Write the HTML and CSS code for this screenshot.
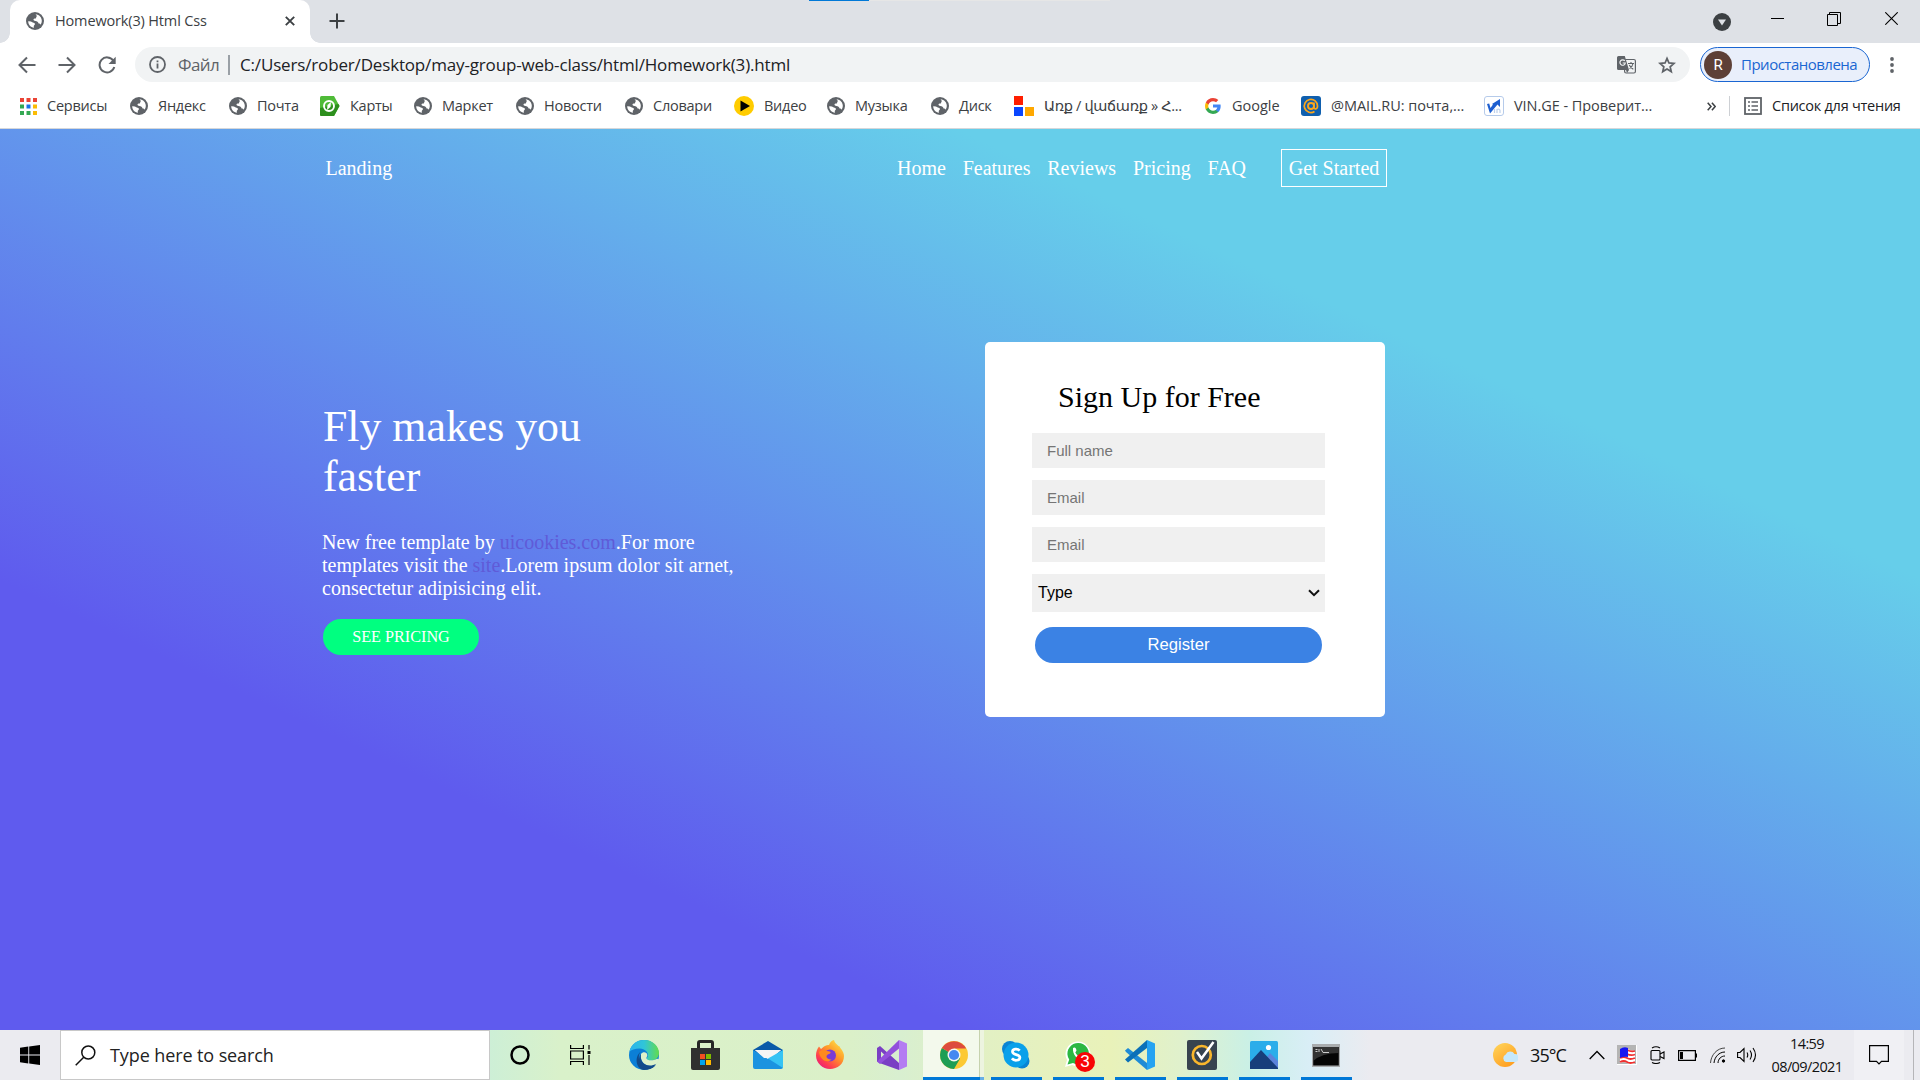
FILE: index.html
```html
<!DOCTYPE html>
<html lang="ru">
<head>
<meta charset="utf-8">
<title>Homework(3) Html Css</title>
<link rel="stylesheet" href="styles.css">
</head>
<body>
<svg class="defs" width="0" height="0">
  <defs>
    <symbol id="globe" viewBox="0 0 18 18">
      <circle cx="9" cy="9" r="9" fill="#5f6368"/>
      <path d="M9.500 2.200c3.800.3 6.300 3.200 6.300 6.500 0 1.500-.5 2.900-1.200 4-.3-.9-1-1.300-2-1.300-.4-1.600-1.500-2.500-3.200-2.500-1.200 0-1.900-.5-1.900-1.300 0-.9.900-1 1.800-1 .9 0 .7-1.300 1.200-1.900.6-.6.200-1.500-1-2.500z" fill="#fff"/>
      <path d="M2.200 9.300c1.800-.1 3.300.2 4.600 1.100.9.600 2.200.5 2.200 1.500 0 1-1.100 1.200-1.200 2.200-.1.700 0 1.200.2 1.700C4.700 15.400 2.200 12.700 2.200 9.300z" fill="#fff"/>
    </symbol>
  </defs>
</svg>
<div class="screen">
  <header class="browser">
    <div class="tabstrip">
      <div class="progress"></div>
      <div class="tab">
        <svg class="i18"><use href="#globe"/></svg>
        <span class="tab-title">Homework(3) Html Css</span>
        <svg class="tab-close" width="10" height="10" viewBox="0 0 10 10"><path d="M.8.8l8.400 8.400M9.200.8L.8 9.200" stroke="#3c4043" stroke-width="1.900"/></svg>
      </div>
      <svg class="plus" width="16" height="16" viewBox="0 0 16 16"><path d="M8 .5v15M.5 8h15" stroke="#3c4043" stroke-width="2"/></svg>
      <div class="winctl">
        <svg width="18" height="18" viewBox="0 0 18 18"><circle cx="9" cy="9" r="9" fill="#3c4043"/><path d="M5 6.500h8L9 12.500z" fill="#dee1e6"/></svg>
        <svg width="13" height="13" viewBox="0 0 13 13"><path d="M0 6.500h13" stroke="#000"/></svg>
        <svg width="14" height="14" viewBox="0 0 14 14" fill="none" stroke="#000"><path d="M.5 2.500h10v11H.5zM2.500 2.500v-2h11v11h-3"/></svg>
        <svg width="13" height="13" viewBox="0 0 13 13"><path d="M.3.3l12.400 12.400M12.700.3L.3 12.700" stroke="#000" stroke-width="1.100"/></svg>
      </div>
    </div>
    <div class="toolbar">
      <div class="navbtns">
        <svg width="18" height="18" viewBox="0 0 18 18" fill="none" stroke="#5f6368" stroke-width="2"><path d="M17.500 9H2M9 1.500L1.500 9 9 16.500"/></svg>
        <svg width="18" height="18" viewBox="0 0 18 18" fill="none" stroke="#5f6368" stroke-width="2"><path d="M.5 9H16M9 1.500L16.500 9 9 16.500"/></svg>
        <svg width="18" height="18" viewBox="0 0 18 18" fill="none" stroke="#5f6368" stroke-width="2"><path d="M15.200 4.500A7.500 7.500 0 1 0 16.300 11"/><path d="M17.700.8v7.200h-7.200z" fill="#5f6368" stroke="none"/></svg>
      </div>
      <div class="omnibox">
        <svg width="17" height="17" viewBox="0 0 17 17"><circle cx="8.500" cy="8.500" r="7.500" fill="none" stroke="#5f6368" stroke-width="1.800"/><path d="M7.600 7.500h1.800v5H7.600zM7.600 4.500h1.800v1.800H7.600z" fill="#5f6368"/></svg>
        <span class="scheme">Файл</span>
        <span class="sep"></span>
        <span class="url">C:/Users/rober/Desktop/may-group-web-class/html/Homework(3).html</span>
        <svg class="translate" width="19" height="18" viewBox="0 0 19 18"><rect x="7.600" y="3.500" width="10.800" height="13.500" rx="1.500" fill="#f1f3f4" stroke="#5f6368" stroke-width="1.200"/><path d="M1.500 0h6.300l4.200 14H1.500A1.500 1.500 0 0 1 0 12.500v-11A1.500 1.500 0 0 1 1.500 0zM9 14h3l-2 3z" fill="#5f6368"/><path d="M7.800 4.900A2.700 2.700 0 1 0 8.300 7H5.700" fill="none" stroke="#f1f3f4" stroke-width="1.200"/><path d="M11 7.500h6M14 6v1.500M16 7.500c-.4 2.500-2 4.200-3.500 5M12.300 9c1 2.200 2.500 3.300 4 4.200" fill="none" stroke="#5f6368" stroke-width="1.100"/></svg>
        <svg width="18" height="18" viewBox="0 0 24 24"><path d="M12 3.200l2.600 6.100 6.700.6-5.100 4.400 1.500 6.500L12 17.400l-5.700 3.400 1.500-6.500L2.700 9.900l6.700-.6z" fill="none" stroke="#5f6368" stroke-width="2.300"/></svg>
      </div>
      <div class="profile"><span class="avatar">R</span><span class="paused">Приостановлена</span></div>
      <svg class="dots" width="4" height="16" viewBox="0 0 4 16" fill="#5f6368"><circle cx="2" cy="2" r="1.900"/><circle cx="2" cy="8" r="1.900"/><circle cx="2" cy="14" r="1.900"/></svg>
    </div>
    <div class="bookmarks">
      <div class="bm"><svg class="i17" viewBox="0 0 17 17"><path d="M0 0h4v4H0zM6.500 0h4v4h-4zM13 0h4v4h-4z" fill="#ea4335"/><path d="M0 6.500h4v4H0zM0 13h4v4H0zM6.500 13h4v4h-4z" fill="#34a853"/><path d="M6.500 6.500h4v4h-4z" fill="#1a73e8"/><path d="M13 6.500h4v4h-4zM13 13h4v4h-4z" fill="#fbbc04"/></svg><span>Сервисы</span></div>
      <div class="bm"><svg class="i18"><use href="#globe"/></svg><span>Яндекс</span></div>
      <div class="bm"><svg class="i18"><use href="#globe"/></svg><span>Почта</span></div>
      <div class="bm"><svg width="20" height="20" viewBox="0 0 20 20"><path d="M0 1.500Q0 0 1.500 0H14l5.500 10L14 20H1.500Q0 20 0 18.500z" fill="#4fbb38"/><path d="M0 12l18.500-4 1 2L14 20H1.500Q0 20 0 18.500z" fill="#2d8f1d"/><circle cx="9" cy="10" r="5" fill="none" stroke="#fff" stroke-width="1.900"/><path d="M11 6L10.500 11 7 14 7.500 9z" fill="#fff"/></svg><span>Карты</span></div>
      <div class="bm"><svg class="i18"><use href="#globe"/></svg><span>Маркет</span></div>
      <div class="bm"><svg class="i18"><use href="#globe"/></svg><span>Новости</span></div>
      <div class="bm"><svg class="i18"><use href="#globe"/></svg><span>Словари</span></div>
      <div class="bm"><svg width="20" height="20" viewBox="0 0 20 20"><circle cx="10" cy="10" r="10" fill="#fc0"/><path d="M6.500 4.500L16 10l-9.500 5.500z"/></svg><span>Видео</span></div>
      <div class="bm"><svg class="i18"><use href="#globe"/></svg><span>Музыка</span></div>
      <div class="bm"><svg class="i18"><use href="#globe"/></svg><span>Диск</span></div>
      <div class="bm arm"><svg width="20" height="20" viewBox="0 0 20 20"><path d="M0 0h9v9H0z" fill="#ff1e00"/><path d="M0 11h9v9H0z" fill="#0a46ff"/><path d="M11 11h9v9h-9z" fill="#ffa800"/></svg><span>Առք / վաճառք » Հ...</span></div>
      <div class="bm goo"><svg width="16" height="16" viewBox="0 0 48 48"><path fill="#4285f4" d="M47 24.500c0-1.600-.2-3.200-.4-4.700H24v9h13c-.6 3-2.300 5.500-4.800 7.200v6h7.700C44.400 37.900 47 31.800 47 24.500z"/><path fill="#34a853" d="M24 48c6.500 0 11.900-2.100 15.900-5.800l-7.700-6c-2.200 1.400-4.900 2.300-8.200 2.300-6.300 0-11.600-4.200-13.500-9.900h-8v6.200C6.500 42.600 14.600 48 24 48z"/><path fill="#fbbc05" d="M10.500 28.600c-1-3-1-6.200 0-9.200v-6.200h-8c-3.300 6.700-3.300 14.900 0 21.600z"/><path fill="#ea4335" d="M24 9.500c3.500 0 6.700 1.200 9.200 3.600l6.800-6.800C35.900 2.400 30.500 0 24 0 14.600 0 6.500 5.400 2.500 13.200l8 6.200C12.400 13.700 17.700 9.500 24 9.500z"/></svg><span>Google</span></div>
      <div class="bm mail"><svg width="20" height="20" viewBox="0 0 20 20"><rect width="20" height="20" rx="3" fill="#0f5fae"/><circle cx="10" cy="10" r="3" fill="none" stroke="#fda61a" stroke-width="1.900"/><path d="M13 6.500v5c0 2 3.500 2.200 3.500-1.500A6.600 6.600 0 1 0 13.500 15.500" fill="none" stroke="#fda61a" stroke-width="1.700"/></svg><span>@MAIL.RU: почта,...</span></div>
      <div class="bm vin"><svg width="20" height="20" viewBox="0 0 20 20"><rect x=".5" y=".5" width="19" height="19" rx="2.500" fill="#fff" stroke="#b6cbea"/><path d="M3 8l2.200-.5L6.500 12 9 8.500l-1-.5L16 3v8l-2.500-2.500L6 17.500z" fill="#1e5fd0"/><path d="M10.500 13v4M13 17v-3.500q2.500-1 3 1V17" fill="none" stroke="#bdd0ec" stroke-width="1.200"/></svg><span>VIN.GE - Проверит...</span></div>
      <svg class="more" width="9" height="9" viewBox="0 0 9 9" fill="none" stroke="#3c4043" stroke-width="1.500"><path d="M.7.7l3.300 3.800L.7 8.300M4.900.7l3.300 3.800-3.300 3.800"/></svg>
      <div class="bm reading"><svg width="18" height="18" viewBox="0 0 18 18"><rect x="1" y="1" width="16" height="16" fill="none" stroke="#5f6368" stroke-width="1.800"/><path d="M4 5h2M7.500 5H14M4 9h2M7.500 9H14M4 13h2M7.500 13H14" stroke="#5f6368" stroke-width="1.700"/></svg><span>Список для чтения</span></div>
    </div>
  </header>

  <main class="page">
    <nav class="nav">
      <span class="brand">Landing</span>
      <div class="links"><span>Home</span><span>Features</span><span>Reviews</span><span>Pricing</span><span>FAQ</span></div>
      <span class="start">Get Started</span>
    </nav>
    <div class="hero">
      <section class="intro">
        <h1>Fly makes you<br>faster</h1>
        <p>New free template by <a>uicookies.com</a>.For more<br>templates visit the <a>site</a>.Lorem ipsum dolor sit arnet,<br>consectetur adipisicing elit.</p>
        <span class="pricing">SEE PRICING</span>
      </section>
      <section class="card">
        <h2>Sign Up for Free</h2>
        <div class="field">Full name</div>
        <div class="field">Email</div>
        <div class="field">Email</div>
        <div class="select"><span>Type</span><svg width="12" height="8" viewBox="0 0 12 8"><path d="M1 1.200l5 5 5-5" fill="none" stroke="#111" stroke-width="2"/></svg></div>
        <div class="register">Register</div>
      </section>
    </div>
  </main>

  <footer class="taskbar">
    <div class="win"><svg width="20" height="20" viewBox="0 0 20 20"><path d="M0 2.800l8.300-1.200v8H0zM9.200 1.500L20 0v9.600H9.200zM0 10.400h8.300v8L0 17.200zM9.200 10.400H20V20L9.200 18.500z"/></svg></div>
    <div class="search"><svg width="21" height="21" viewBox="0 0 21 21" fill="none" stroke="#111" stroke-width="1.500"><circle cx="13.300" cy="7.500" r="6.500"/><path d="M8.700 12.200L.7 20.200"/></svg><span>Type here to search</span></div>
    <div class="apps">
      <div class="app"><svg width="20" height="20" viewBox="0 0 20 20"><circle cx="10" cy="10" r="8.500" fill="none" stroke="#000" stroke-width="2.500"/></svg></div>
      <div class="app taskview"><svg width="21" height="20" viewBox="0 0 21 20" fill="none" stroke="#000" stroke-width="1.200"><path d="M.6 0v3.500h12.800V0M.6 6h12.800v8H.6zM.6 20v-3.500h12.800V20M19 0v4.500M19 10v10"/><path d="M17.500 6h3v3h-3z" fill="#000" stroke="none"/></svg></div>
      <div class="app"><svg width="30" height="30" viewBox="0 0 30 30"><defs><linearGradient id="e1" x1="0" x2="1"><stop offset="0" stop-color="#2bb3ee"/><stop offset=".5" stop-color="#30c5d8"/><stop offset="1" stop-color="#63dc4c"/></linearGradient></defs><circle cx="15" cy="15" r="15" fill="#0b7fd6"/><path d="M.3 12C2 4 8 0 15 0c9 0 15 6.500 15 13 0 4.500-3.500 7.500-8 7.500-3.500 0-5-1.200-4-2.500C21 14 17 8.500 10.500 8.500 6 8.500 2 10 .3 12z" fill="url(#e1)"/><path d="M11.500 12C7 18 12 27 20 27c3 0 5-.8 7-2-3 3.500-7 5-12 5C7 29 5 17 11.500 12z" fill="#114a8b"/><path d="M12 14c1.500-2.500 6-2.500 6.300 1 .1 1.500-1 2.200-.9 3.300.3 2 5.500 3.200 10.600.5l1.800.2c0 1.700-1.300 4-2.500 5.200-6 4.300-17 .5-15.300-10.200z" fill="#dcf1ca"/><path d="M12 14c-1.500 6 2.500 11.500 8.500 11.500 3 0 5-.7 6.500-1.500-2 3-5 5-9 5C10 28.500 8 19 12 14z" fill="#114a8b"/></svg></div>
      <div class="app"><svg width="30" height="30" viewBox="0 0 30 30"><path d="M7.500 9V3q0-1.500 1.500-1.500h11q1.500 0 1.500 1.500v6" fill="none" stroke="#262626" stroke-width="3"/><path d="M0 8h29v20q0 2-2 2H2q-2 0-2-2z" fill="#303030"/><path d="M9 14h5v5H9z" fill="#f25022"/><path d="M15 14h5v5h-5z" fill="#7fba00"/><path d="M9 20h5v5H9z" fill="#00a4ef"/><path d="M15 20h5v5h-5z" fill="#ffb900"/></svg></div>
      <div class="app"><svg width="30" height="28" viewBox="0 0 30 28"><path d="M0 9L15 0l15 9v4H0z" fill="#0a5aa8"/><path d="M2 9h26L15 20z" fill="#f5f5f5"/><path d="M0 9l15 9 15-9v17q0 2-2 2H2q-2 0-2-2z" fill="#1b93e0"/><path d="M2 9h26l-9 8h-8z" fill="#f5f5f5"/><path d="M30 9v18L15 17.500z" fill="#36c3f4"/></svg></div>
      <div class="app"><svg width="30" height="30" viewBox="0 0 30 30"><defs><linearGradient id="f1" x1="1" y1="0" x2=".2" y2="1"><stop offset="0" stop-color="#fff44f"/><stop offset=".45" stop-color="#ff9a28"/><stop offset=".8" stop-color="#ff3c50"/><stop offset="1" stop-color="#e61a80"/></linearGradient></defs><path d="M4 6.500L6 9l3-2.500C11 5 13 5 14 5c1-3 3-4.500 5-5 .5 3 3 4 4.500 6 1 .3 1.500.8 1.500 1.500C28 11 29 14 29 16c0 8-6.500 13-14 13S1 23 1 15.500C1 12 2 9 4 6.500z" fill="url(#f1)"/><circle cx="15" cy="15.500" r="6" fill="#7a3bd6"/><path d="M4 12c3-3 6-2 8-1 2 .3 4 .5 3.500 2-1 1.500-3.500 1-4 3-.3 2 2 3.500 5 3.500-3.500 4-11.500 1-12.500-7.500z" fill="#ff8a1e"/></svg></div>
      <div class="app"><svg width="30" height="30" viewBox="0 0 30 30"><path d="M0 8l3-2 19 17v7L2.500 23 0 21.500zM4 11.500v7.500l4-3.700z" fill="#7a3fc4" fill-rule="evenodd"/><path d="M0 21.500L22 0v8.500L3 24z" fill="#9250dc"/><path d="M22 0l8 3.500v23L22 30z" fill="#b47cf2"/></svg></div>
      <div class="app active"><svg width="28" height="28" viewBox="0 0 28 28"><circle cx="14" cy="14" r="14" fill="#fcc934"/><path d="M14 14L1.900 7A14 14 0 0 0 14 28l6.100-10.500z" fill="#1e9e55"/><path d="M14 14L1.900 7A14 14 0 0 1 26.100 7.500H14z" fill="#dd4b3e"/><circle cx="14" cy="14" r="6.500" fill="#f6f8f0"/><circle cx="14" cy="14" r="5.100" fill="#4688f1"/></svg></div>
      <div class="app open"><svg width="28" height="28" viewBox="0 0 28 28"><circle cx="8" cy="8" r="8" fill="#0a84d4"/><circle cx="20" cy="20" r="7.500" fill="#0a84d4"/><circle cx="14" cy="14" r="12.500" fill="#09a0ea"/><path d="M17.700 9.700C15.500 7.200 10.300 7.800 10.500 10.900c.3 3.400 7.500 2 7.400 5.700-.2 3.200-5.800 3.600-8 .8" fill="none" stroke="#fff" stroke-width="2.700"/></svg></div>
      <div class="app open"><svg width="26" height="30" viewBox="0 0 26 30"><path d="M0 27l2-7A12.500 12.500 0 1 1 7 25z" fill="#fff"/><path d="M2.500 24.500l1.700-5A10.700 10.700 0 1 1 8 23z" fill="#2cb742"/><path d="M8 8c2-1.500 3 0 3.500 2.500l-1.200 2C11.500 15 13 16 15 17l2-1.500 3 2c-2 5-13 .5-12-9.500z" fill="#fff"/></svg><span class="badge">3</span></div>
      <div class="app open"><svg width="30" height="30" viewBox="0 0 30 30"><path d="M0 10.500L3 8l19 15v7L1 12z" fill="#1f8bd6"/><path d="M0 19.500L22 0v8L3 22.500z" fill="#0b70b8"/><path d="M22 0l8 3.500v23L22 30z" fill="#25a3f2"/></svg></div>
      <div class="app open"><svg width="30" height="30" viewBox="0 0 30 30"><rect width="30" height="30" rx="2" fill="#37434f"/><circle cx="14.800" cy="15" r="9" fill="none" stroke="#f9b62c" stroke-width="2.700"/><path d="M10 12l4.500 6.500L26.500 2" fill="none" stroke="#fff" stroke-width="2.500"/></svg></div>
      <div class="app open"><svg width="28" height="28" viewBox="0 0 28 28"><rect width="28" height="28" rx="1.500" fill="#2badea"/><path d="M12 23l8-11 8 8v8H12z" fill="#5b83db"/><path d="M0 21L11 9l17 18v1H0z" fill="#173e7b"/><circle cx="18.500" cy="6.500" r="2.600" fill="#fff"/></svg></div>
      <div class="app open"><svg width="28" height="23" viewBox="0 0 28 23"><path d="M0 0h28v23H0z" fill="#a9acae"/><path d="M1.200 3h25.600v18.500H1.200z" fill="#050505"/><path d="M1.200 3h25.600v6Q10 9 1.200 17z" fill="#333"/><path d="M3.500 5.500h2M3.500 7.500h2M7 5v3M9 5l2 3.500h6" stroke="#ccc" fill="none"/></svg></div>
    </div>
    <div class="tray">
      <svg class="sun" width="25" height="25" viewBox="0 0 25 25"><defs><linearGradient id="s1" x1="0" y1="0" x2=".7" y2="1"><stop offset="0" stop-color="#ffd75e"/><stop offset="1" stop-color="#ff9d1f"/></linearGradient></defs><circle cx="12" cy="12" r="12" fill="url(#s1)"/><path d="M13 19a4 4 0 0 1-.3-7.500 5 5 0 0 1 8.800-.5 4 4 0 0 1 .3 8z" fill="#c5e8fb"/></svg>
      <span class="temp">35°C</span>
      <svg class="t1" width="16" height="10" viewBox="0 0 16 10"><path d="M.7 9L8 1.500 15.300 9" fill="none" stroke="#000" stroke-width="1.300"/></svg>
      <svg class="t2" width="20" height="20" viewBox="0 0 20 20"><path d="M0 0h20v20H0z" fill="#fff"/><path d="M0 0h19v19H0z" fill="#b4b4b4"/><path d="M3 4.500q4-3 7-1t8 2.500v12q-5 2-8 0t-7 0z" fill="#fff"/><path d="M3 13q4-2 7 0t8 0M3 17q4-2 7 0t8 0M10 5q4 2 8 1M10 9q4 2 8 .5" fill="none" stroke="#ef3030" stroke-width="1.800"/><path d="M3 4q4-3 8-1v9q-4-1-8 1z" fill="#1717f2"/></svg>
      <svg class="t3" width="16" height="18" viewBox="0 0 16 18" fill="none" stroke="#000" stroke-width="1.100"><rect x="1" y="4.500" width="9" height="9.500" rx="1"/><path d="M10 8l4-2v6.500l-4-2M2 2q4-2.500 8 0M2 16.500q4 2 8 0"/></svg>
      <svg class="t4" width="19" height="11" viewBox="0 0 19 11"><path d="M.6.6h16.800v9.800H.6z" fill="none" stroke="#000" stroke-width="1.200"/><path d="M2 2h3v7H2zM17.500 3.500H19v4h-1.500z"/></svg>
      <svg class="t5" width="16" height="17" viewBox="0 0 16 17" fill="none" stroke="#000"><path d="M.5 16C1 8 7 1 15 1" stroke="#444"/><path d="M4 16c.5-6 5-11 11-11M8 16c.2-4 3-7 7-7"/><circle cx="13.500" cy="14" r="1.200" fill="#000"/></svg>
      <svg class="t6" width="21" height="16" viewBox="0 0 21 16" fill="none" stroke="#000" stroke-width="1.100"><path d="M.6 5.500H3L7 1.500v13l-4-4H.6zM10 5.500q1.500 2.500 0 5M13 3.500q3 4.500 0 9M16 1q5 7 0 14"/></svg>
      <div class="clock"><span class="time">14:59</span><span class="date">08/09/2021</span></div>
      <div class="note"><svg width="20" height="20" viewBox="0 0 20 20"><path d="M.6.600h18.800v15.800H12.500L10 19l-2.500-2.600H.6z" fill="none" stroke="#000" stroke-width="1.200"/></svg></div>
    </div>
  </footer>
</div>
</body>
</html>
```
FILE: styles.css
```css
* { box-sizing: border-box; }
body { margin: 0; background: #fff; }
.defs { display: block; position: absolute; }
.screen { display: flex; flex-direction: column; width: 1920px; height: 1080px; overflow: hidden; font-family: "Open Sans", "Noto Sans", "DejaVu Sans", sans-serif; white-space: nowrap; }
svg { flex: none; display: block; }
.i18 { width: 18px; height: 18px; }
.i17 { width: 17px; height: 17px; }

.browser { height: 129px; flex: none; border-bottom: 1px solid #d5d7da; }
.tabstrip { position: relative; height: 43px; background: #dee1e6; display: flex; padding-left: 10px; }
.progress { position: absolute; left: 809px; top: 0; width: 301px; height: 1px; background: linear-gradient(90deg, #0078d7 60px, #e6e6e6 60px); }
.tab { position: relative; width: 300px; background: #fff; border-radius: 10px 10px 0 0; display: flex; align-items: center; padding: 0 15px 1px 16px; }
.tab::before, .tab::after { content: ""; position: absolute; bottom: 0; width: 10px; height: 10px; }
.tab::before { left: -10px; background: radial-gradient(circle at 0 0, transparent 9.5px, #fff 10px); }
.tab::after { right: -10px; background: radial-gradient(circle at 100% 0, transparent 9.5px, #fff 10px); }
.tab-title { margin-left: 11px; font-size: 14.500px; letter-spacing: -.150px; color: #3c4043; padding-bottom: 1px; }
.tab-close { margin-left: auto; }
.plus { margin: 13px 0 0 19px; }
.winctl { margin-left: auto; padding-right: 22px; display: grid; grid-template-columns: 58px 56px 58px 13px; align-items: center; height: 37px; }
.winctl svg:first-child { margin-top: 6px; }

.toolbar { height: 43px; display: flex; align-items: center; padding: 0 26px 0 18px; }
.navbtns { display: flex; gap: 22px; width: 117px; }
.omnibox { width: 1555px; height: 35px; border-radius: 18px; background: #f1f3f4; display: flex; align-items: center; padding: 0 14px; }
.scheme { margin-left: 12px; width: 50px; font-size: 17px; letter-spacing: -.6px; color: #5f6368; }
.sep { width: 2px; height: 20px; background: #9aa0a6; margin-right: 10px; }
.url { font-size: 17px; letter-spacing: -.16px; color: #202124; }
.translate { margin: 0 22px 0 auto; }
.profile { margin-left: 10px; width: 170px; height: 35px; border: 1.500px solid #1a66d2; border-radius: 18px; background: #e9effb; display: flex; align-items: center; padding-left: 3px; color: #1a66d2; font-size: 15px; }
.avatar { width: 28px; height: 28px; border-radius: 50%; background: #5d4037; color: #fff; font: 15px/28px Roboto, sans-serif; text-align: center; margin-right: 9px; }
.paused { letter-spacing: -.5px; padding-bottom: 2px; }
.dots { margin-left: auto; }

.bookmarks { height: 40px; display: grid; grid-template-columns: 110px 99px 91px 94px 102px 109px 109px 93px 104px 83px 191px 96px 183px 223px 22px 1fr; padding-left: 20px; align-items: center; color: #3c4043; }
.bm { display: flex; align-items: center; gap: 10px; font-size: 14.500px; letter-spacing: -.25px; min-width: 0; }
.bm span { padding-bottom: 2px; }
.goo { gap: 11px; letter-spacing: 0; }
.mail, .vin { letter-spacing: -.05px; }
.arm { letter-spacing: -.35px; }
.reading { border-left: 1px solid #cdd0d4; height: 20px; padding-left: 14px; color: #202124; }

.page { flex: 1; background: linear-gradient(25deg, #5f5bee 25%, #66ceea 75%); font-family: "Liberation Serif", serif; color: #fff; font-size: 20px; }
.nav { display: flex; align-items: center; height: 38px; margin: 20px 0 0 325.500px; line-height: 39px; }
.brand { width: 571.500px; }
.links { display: flex; gap: 16.800px; width: 384px; }
.start { width: 106px; height: 38px; border: 1px solid #fff; line-height: 37px; text-align: center; }
.hero { display: flex; justify-content: space-between; align-items: flex-start; width: 1062px; margin: 155px 0 0 323px; }
.intro { padding-top: 59px; }
h1 { margin: 0; font-size: 43.800px; font-weight: 400; line-height: 50px; }
p { margin: 30px 0 19px -1px; line-height: 23px; }
p a { color: #5f5bd8; }
.pricing { display: block; width: 156px; height: 36px; border-radius: 18px; background: #00ff80; font-size: 16.200px; line-height: 36px; text-align: center; }
.card { width: 400px; height: 375px; border-radius: 5px; background: #fff; padding: 37px 60px 0 47px; color: #000; font-family: "Liberation Sans", sans-serif; }
h2 { margin: 0 0 19px 26px; font: 400 30px/35px "Liberation Serif", serif; }
.field { height: 35px; margin-bottom: 12px; background: #f0f0f0; color: #757575; font-size: 15px; line-height: 35px; padding-left: 15px; }
.select { height: 38px; background: #f0f0f0; display: flex; align-items: center; justify-content: space-between; padding: 0 5px 0 6px; font-size: 16px; }
.register { height: 36px; margin: 15px 3px 0; border-radius: 18px; background: #3b82e4; color: #fff; font-size: 16.670px; line-height: 35px; text-align: center; }

.taskbar { height: 50px; flex: none; display: flex; background: linear-gradient(90deg, #ebebf0 480px, #cdefd6 490px, #d9f1ca 560px, #dbf0c8 850px, #d8efd0 900px, #e2f0c4 980px, #e9f2b9 1110px, #e0f1cc 1180px, #caf0e6 1250px, #d9eef6 1310px, #ebebf0 1370px); color: #111; }
.win { width: 60px; display: flex; align-items: center; padding-left: 20px; }
.search { width: 430px; background: #fff; border: 1px solid #c8c8c8; display: flex; align-items: center; padding-left: 14px; font-size: 18px; letter-spacing: -.1px; }
.search span { margin-left: 14px; color: #222; }
.apps { display: flex; width: 992px; margin-left: -1px; }
.app { position: relative; width: 62px; height: 50px; display: flex; align-items: center; justify-content: center; }
.taskview { padding-right: 3px; }
.active { background: linear-gradient(90deg, #f3f9ec 56px, #c6d2ae 56px, #c6d2ae 57px, #edf4e0 57px, #edf4e0 61px, transparent 61px); }
.active::after, .open::after { content: ""; position: absolute; left: 6px; bottom: 0; width: 51px; height: 3px; background: #0078d7; }
.active::after { left: 0; width: 61px; background: linear-gradient(90deg, #0078d7 57px, #66aee7 57px); }
.badge { position: absolute; left: 28px; top: 22px; width: 20px; height: 20px; border-radius: 50%; background: #f80505; color: #fff; font: 17px/20px "Liberation Sans", sans-serif; text-align: center; }
.tray { flex: 1; display: flex; align-items: center; padding-left: 12px; }
.temp { width: 59px; margin-left: 12px; font-size: 18px; letter-spacing: -.9px; }
.t2 { margin-left: 12px; }
.t3 { margin-left: 13px; }
.t4 { margin-left: 12px; }
.t5 { margin-left: 13px; }
.t6 { margin-left: 11px; }
.clock { width: 98px; margin-right: -2px; display: flex; flex-direction: column; align-items: center; font-size: 14.500px; line-height: 23px; }
.time { letter-spacing: -.6px; }
.date { letter-spacing: -.6px; }
.note { width: 60px; height: 50px; padding-left: 15px; border-right: 1px solid #b5b5b8; background: linear-gradient(90deg, #f0f0f4 50px, transparent 50px); display: flex; align-items: center; }
```
